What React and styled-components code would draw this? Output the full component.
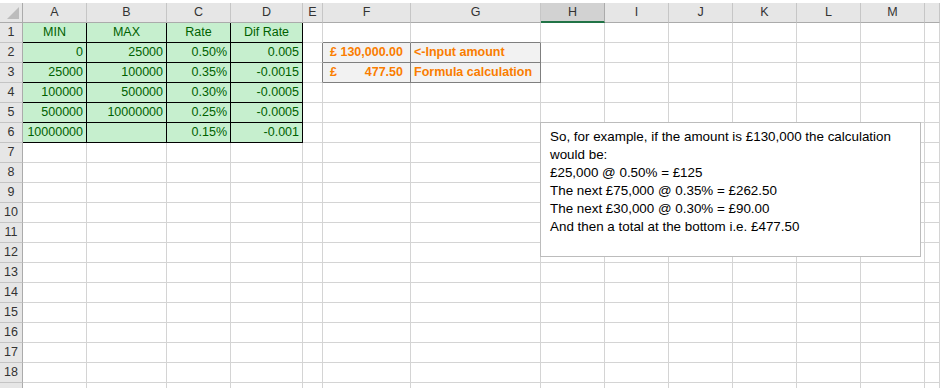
import React from 'react'
import styled, { createGlobalStyle } from 'styled-components'

const GlobalStyle = createGlobalStyle`
  html, body {
    margin: 0;
    padding: 0;
    background: #ffffff;
    overflow: hidden;
  }
`

// N is only a sliver at the right edge, so it gets no label
const COLUMNS = [
  { key: 'A', w: '64px' },
  { key: 'B', w: '80px' },
  { key: 'C', w: '64px' },
  { key: 'D', w: '72px' },
  { key: 'E', w: '20px' },
  { key: 'F', w: '88px' },
  { key: 'G', w: '130px' },
  { key: 'H', w: '64px' },
  { key: 'I', w: '64px' },
  { key: 'J', w: '64px' },
  { key: 'K', w: '64px' },
  { key: 'L', w: '64px' },
  { key: 'M', w: '64px' },
  { key: 'N', w: 'minmax(0, 1fr)', hideLabel: true }
]

const ROW_COUNT = 19
const LAST_LABELLED_ROW = 18
const SELECTED_COL = 'H'

const BORDERS = {
  green: '#000000',
  calc: '#7f7f7f'
}

// cell contents, keyed by address
const CELLS = {
  A1: { v: 'MIN', align: 'center', kind: 'green' },
  B1: { v: 'MAX', align: 'center', kind: 'green' },
  C1: { v: 'Rate', align: 'center', kind: 'green' },
  D1: { v: 'Dif Rate', align: 'center', kind: 'green' },
  A2: { v: '0', kind: 'green' },
  B2: { v: '25000', kind: 'green' },
  C2: { v: '0.50%', kind: 'green' },
  D2: { v: '0.005', kind: 'green' },
  A3: { v: '25000', kind: 'green' },
  B3: { v: '100000', kind: 'green' },
  C3: { v: '0.35%', kind: 'green' },
  D3: { v: '-0.0015', kind: 'green' },
  A4: { v: '100000', kind: 'green' },
  B4: { v: '500000', kind: 'green' },
  C4: { v: '0.30%', kind: 'green' },
  D4: { v: '-0.0005', kind: 'green' },
  A5: { v: '500000', kind: 'green' },
  B5: { v: '10000000', kind: 'green' },
  C5: { v: '0.25%', kind: 'green' },
  D5: { v: '-0.0005', kind: 'green' },
  A6: { v: '10000000', kind: 'green' },
  B6: { v: '', kind: 'green' },
  C6: { v: '0.15%', kind: 'green' },
  D6: { v: '-0.001', kind: 'green' },
  F2: { money: '130,000.00', kind: 'calc' },
  G2: { v: '<-Input amount', align: 'left', kind: 'calc' },
  F3: { money: '477.50', kind: 'calc' },
  G3: { v: 'Formula calculation', align: 'left', kind: 'calc' }
}

const NOTE_LINES = [
  'So, for example, if the amount is £130,000 the calculation',
  'would be:',
  '£25,000 @ 0.50% = £125',
  'The next £75,000 @ 0.35% = £262.50',
  'The next £30,000 @ 0.30% = £90.00',
  'And then a total at the bottom i.e. £477.50'
]

const kindAt = (colIdx, row) => {
  const col = COLUMNS[colIdx]
  if (!col) return null
  const cell = CELLS[`${col.key}${row}`]
  return cell ? cell.kind : null
}

const Sheet = styled.div`
  position: relative;
  width: 940px;
  height: 388px;
  overflow: hidden;
  padding-top: 3px;
  box-sizing: border-box;
  font-family: "Liberation Sans", Arial, sans-serif;
  font-size: 12.5px;
`

const Grid = styled.div`
  display: grid;
  grid-template-columns: 23px ${COLUMNS.map(c => c.w).join(' ')};
  grid-auto-rows: 20px;
`

const Corner = styled.div`
  position: relative;
  box-sizing: border-box;
  background: #e6e6e6;
  border-right: 1px solid #ababab;
  border-bottom: 1px solid #ababab;

  &::after {
    content: '';
    position: absolute;
    right: 3px;
    bottom: 3px;
    width: 0;
    height: 0;
    border-left: 12px solid transparent;
    border-bottom: 12px solid #bcbcbc;
  }
`

const ColHeader = styled.div`
  box-sizing: border-box;
  display: flex;
  align-items: center;
  justify-content: center;
  overflow: hidden;
  line-height: 19px;
  color: #333333;
  background: ${p => (p.$selected ? '#d2d2d2' : '#e6e6e6')};
  border-right: 1px solid ${p => (p.$selected ? '#ababab' : '#c6c6c6')};
  border-bottom: ${p => (p.$selected ? '2px solid #217346' : '1px solid #ababab')};
  padding-top: ${p => (p.$selected ? '1px' : '0')};
`

const RowHeader = styled.div`
  box-sizing: border-box;
  display: flex;
  align-items: center;
  justify-content: center;
  line-height: 19px;
  color: #333333;
  background: #e6e6e6;
  border-right: 1px solid #ababab;
  border-bottom: 1px solid #c4c4c4;
`

const KIND_STYLES = {
  green: { bg: '#c6efce', fg: '#006100', weight: 400 },
  calc: { bg: '#f2f2f2', fg: '#fa7d00', weight: 700 }
}

const Cell = styled.div`
  box-sizing: border-box;
  display: flex;
  align-items: flex-end;
  justify-content: ${p => ({ left: 'flex-start', center: 'center', right: 'flex-end' }[p.$align] || 'flex-end')};
  padding: 0 3px 1px 3px;
  line-height: 18px;
  white-space: nowrap;
  overflow: hidden;
  background: ${p => (p.$kind ? KIND_STYLES[p.$kind].bg : '#ffffff')};
  color: ${p => (p.$kind ? KIND_STYLES[p.$kind].fg : '#000000')};
  font-weight: ${p => (p.$kind ? KIND_STYLES[p.$kind].weight : 400)};
  border-right: 1px solid ${p => p.$rb};
  border-bottom: 1px solid ${p => p.$bb};
`

const Money = styled.span`
  display: flex;
  justify-content: space-between;
  width: 100%;
  padding: 0 4px 0 4px;
`

const Note = styled.div`
  position: absolute;
  left: 540px;
  top: 122px;
  width: 381px;
  height: 135px;
  box-sizing: border-box;
  padding: 5px 9px;
  background: #ffffff;
  border: 1px solid #bcbcbc;
  font-size: 13.4px;
  line-height: 18px;
  color: #000000;
`

const NoteLine = styled.div`
  white-space: nowrap;
`

function App () {
  const rows = []
  for (let r = 1; r <= ROW_COUNT; r++) {
    rows.push(<RowHeader key={`rh${r}`}>{r <= LAST_LABELLED_ROW ? r : ''}</RowHeader>)
    COLUMNS.forEach((col, ci) => {
      const cell = CELLS[`${col.key}${r}`]
      const own = cell ? cell.kind : null
      const right = own || kindAt(ci + 1, r)
      const below = own || kindAt(ci, r + 1)
      const rb = right ? BORDERS[right] : '#d4d4d4'
      const bb = below ? BORDERS[below] : '#d4d4d4'
      rows.push(
        <Cell key={`${col.key}${r}`} $kind={own} $align={cell && cell.align} $rb={rb} $bb={bb}>
          {cell && cell.money
            ? <Money><span>£</span><span>{cell.money}</span></Money>
            : cell && cell.v}
        </Cell>
      )
    })
  }

  return (
    <>
      <GlobalStyle />
      <Sheet>
        <Grid>
          <Corner />
          {COLUMNS.map(col => (
            <ColHeader key={col.key} $selected={col.key === SELECTED_COL}>
              {col.hideLabel ? '' : col.key}
            </ColHeader>
          ))}
          {rows}
        </Grid>
        <Note>
          {NOTE_LINES.map((line, i) => <NoteLine key={i}>{line}</NoteLine>)}
        </Note>
      </Sheet>
    </>
  )
}

export default App
